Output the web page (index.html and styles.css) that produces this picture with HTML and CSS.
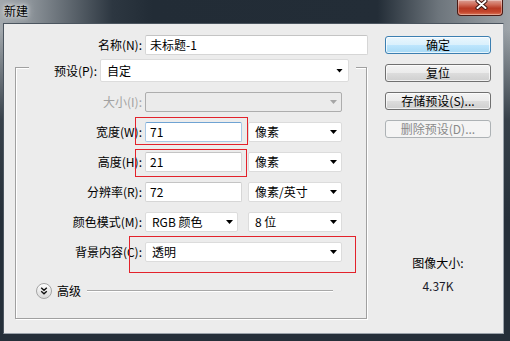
FILE: index.html
```html
<!DOCTYPE html>
<html lang="zh-CN">
<head>
<meta charset="utf-8">
<title>新建</title>
<link rel="stylesheet" href="styles.css">
</head>
<body>
<div class="titlebar">
  <span class="title">新建</span>
  <div class="close">
    <svg width="44" height="15" viewBox="0 0 44 15">
      <path d="M19.5 1L27.5 8M27.5 1L19.5 8" stroke="#3a1410" stroke-width="4" stroke-linecap="round"/>
      <path d="M19.5 1L27.5 8M27.5 1L19.5 8" stroke="#fff" stroke-width="2" stroke-linecap="round"/>
    </svg>
  </div>
</div>
<div class="client">
  <div class="left">
    <div class="name-row">
      <span class="lbl name-lbl">名称(N):</span>
      <div class="input name-input">未标题-1</div>
    </div>
    <div class="group">
      <div class="group-head">
        <span class="lbl head-lbl">预设(P):</span>
        <div class="select preset"><span>自定</span><i class="arrow"></i></div>
      </div>
      <div class="rows">
        <div class="row">
          <span class="lbl row-lbl disabled">大小(I):</span>
          <div class="ctrls"><div class="select full off"><span></span><i class="arrow"></i></div></div>
        </div>
        <div class="row">
          <span class="lbl row-lbl">宽度(W):</span>
          <div class="ctrls"><div class="input num focus">71</div><div class="select unit"><span>像素</span><i class="arrow"></i></div></div>
        </div>
        <div class="row">
          <span class="lbl row-lbl">高度(H):</span>
          <div class="ctrls"><div class="input num">21</div><div class="select unit"><span>像素</span><i class="arrow"></i></div></div>
        </div>
        <div class="row">
          <span class="lbl row-lbl">分辨率(R):</span>
          <div class="ctrls"><div class="input num">72</div><div class="select unit"><span>像素/英寸</span><i class="arrow"></i></div></div>
        </div>
        <div class="row">
          <span class="lbl row-lbl">颜色模式(M):</span>
          <div class="ctrls"><div class="select mode"><span>RGB 颜色</span><i class="arrow"></i></div><div class="select unit"><span>8 位</span><i class="arrow"></i></div></div>
        </div>
        <div class="row">
          <span class="lbl row-lbl">背景内容(C):</span>
          <div class="ctrls"><div class="select full"><span>透明</span><i class="arrow"></i></div></div>
        </div>
      </div>
      <div class="adv">
        <svg class="adv-icon" width="16" height="16" viewBox="0 0 16 16">
          <defs><linearGradient id="cg" x1="0" y1="0" x2="0" y2="1"><stop offset="0" stop-color="#ffffff"/><stop offset="1" stop-color="#d8d8d8"/></linearGradient></defs>
          <circle cx="8" cy="8" r="7.5" fill="url(#cg)" stroke="#a4a4a4"/>
          <path d="M5.2 4.8L8 7.3L10.8 4.8M5.2 8.3L8 10.8L10.8 8.3" fill="none" stroke="#111" stroke-width="1.4"/>
        </svg>
        <span class="adv-text">高级</span>
        <span class="adv-line"></span>
      </div>
    </div>
  </div>
  <div class="right">
    <div class="btn default">确定</div>
    <div class="btn">复位</div>
    <div class="btn">存储预设(S)...</div>
    <div class="btn off">删除预设(D)...</div>
    <div class="info">
      <div>图像大小:</div>
      <div class="size">4.37K</div>
    </div>
  </div>
</div>
<div class="mark mark-w"></div>
<div class="mark mark-h"></div>
<div class="mark mark-c"></div>
</body>
</html>
```

FILE: styles.css
```css
* { box-sizing: border-box; margin: 0; padding: 0; }
html, body { width: 510px; height: 341px; overflow: hidden; }
body {
  font-family: "Noto Sans CJK SC", "Microsoft YaHei", sans-serif;
  font-size: 12px;
  color: #000;
  display: flex;
  flex-direction: column;
  background:
    linear-gradient(to bottom, rgba(37,47,57,0) 0, rgba(37,47,57,0) 30px, rgba(37,47,57,.85) 120px, #252f39 220px),
    linear-gradient(to right, #a2a8ad 0, #8c9399 6%, #2d3741 22%, #222c36 30%, #232d37 74%, #6d757c 86%, #9ea4a9 100%);
}
.titlebar { height: 23px; display: flex; justify-content: space-between; align-items: flex-start; flex: none; }
.title { padding: 3px 0 0 4px; line-height: 16px; text-shadow: 0 0 4px #fff, 0 0 8px rgba(255,255,255,.7); }
.close {
  width: 46px; height: 16px; margin-right: 7px;
  border: 1px solid #4a1a14; border-top: none; border-radius: 0 0 4px 4px;
  background: linear-gradient(#dca096 0, #cf6d5a 30%, #b83a24 55%, #c4452c 80%, #dc7a5c 100%);
  box-shadow: inset 0 0 0 1px rgba(255,255,255,.35);
  display: flex; justify-content: center;
}
.close svg { display: block; }
.client {
  margin: 0 6px 7px 3px; height: 311px; flex: none;
  border: 1px solid #4b555f; border-right-color: #9aa2aa; border-bottom-color: #9aa2aa;
  background: #ececec;
  display: flex; padding: 11px 0 0 11px;
}
.left { width: 353px; }
.lbl { text-align: right; line-height: 20px; white-space: nowrap; }
.disabled { color: #a2a2a2; }
.name-row { display: flex; align-items: center; height: 20px; }
.name-lbl { width: 127px; margin-right: 3px; }
.name-input { width: 223px; }
.input {
  height: 20px; background: #fff; border: 1px solid #d6d6d6; border-top-color: #c4c4c4;
  border-radius: 2px; padding: 0 4px; line-height: 18px;
}
.input.focus { border-color: #6fa3d3 #a9c9e6 #a9c9e6 #a9c9e6; }
.select {
  height: 20px; background: #fff; border: 1px solid #dcdcdc; border-radius: 2px;
  display: flex; align-items: center; justify-content: space-between;
  padding: 0 4px 0 6px; line-height: 18px;
}
.arrow { display: block; width: 7px; height: 4px; background: #000; clip-path: polygon(0 0, 100% 0, 50% 100%); }
.select.off { background: #ebebeb; border-color: #adadad; }
.select.off .arrow { background: #a6a6a6; }
.group {
  margin-top: 12px; width: 352px;
  border: 1px solid #a0a0a0;
  box-shadow: inset 1px 1px 0 #fff, 1px 1px 0 #fff;
  padding-bottom: 19px;
}
.group-head {
  margin: -9px 0 0 13px; width: 327px; height: 23px;
  display: flex; align-items: center; background: #ececec; padding-right: 7px;
}
.head-lbl { width: 68px; margin-right: 3px; }
.select.preset { width: 249px; height: 23px; line-height: 21px; padding-right: 5px; }
.rows { display: flex; flex-direction: column; gap: 10px; margin-top: 10px; }
.row { display: flex; align-items: center; height: 20px; }
.row-lbl { width: 126px; margin-right: 3px; }
.ctrls { width: 197px; display: flex; justify-content: space-between; }
.full { width: 197px; }
.num { width: 97px; }
.unit { width: 94px; }
.mode { width: 93px; }
.adv { display: flex; align-items: center; height: 16px; margin-top: 21px; padding-left: 20px; }
.adv-icon { display: block; flex: none; }
.adv-text { margin-left: 5px; line-height: 16px; }
.adv-line { flex: 1; height: 2px; margin: 0 33px 0 6px; border-top: 1px solid #a8a8a8; border-bottom: 1px solid #fff; }
.right { width: 106px; margin-left: 17px; padding-top: 1px; display: flex; flex-direction: column; gap: 10px; }
.btn {
  height: 18px; border: 1px solid #707070; border-radius: 3px;
  background: linear-gradient(#f3f3f3 0, #ebebeb 50%, #dddddd 50%, #cfcfcf 100%);
  box-shadow: inset 0 0 0 1px rgba(255,255,255,.7);
  display: flex; align-items: center; justify-content: center; line-height: 16px;
}
.btn.default { border-color: #3c7fb1; background: linear-gradient(#eaf6fd 0, #d9f0fc 50%, #bee6fd 50%, #a7d9f5 100%); }
.btn.off { border-color: #adb2b5; background: #f4f4f4; box-shadow: none; color: #8a8a8a; }
.info { margin-top: 107px; text-align: center; line-height: 16px; }
.info .size { margin-top: 7px; color: #1a1a2a; }
.mark { position: absolute; border: 1px solid #e3222b; }
.mark-w { left: 135px; top: 117px; width: 113px; height: 28px; }
.mark-h { left: 135px; top: 149px; width: 112px; height: 28px; }
.mark-c { left: 129px; top: 236px; width: 227px; height: 37px; }
```
